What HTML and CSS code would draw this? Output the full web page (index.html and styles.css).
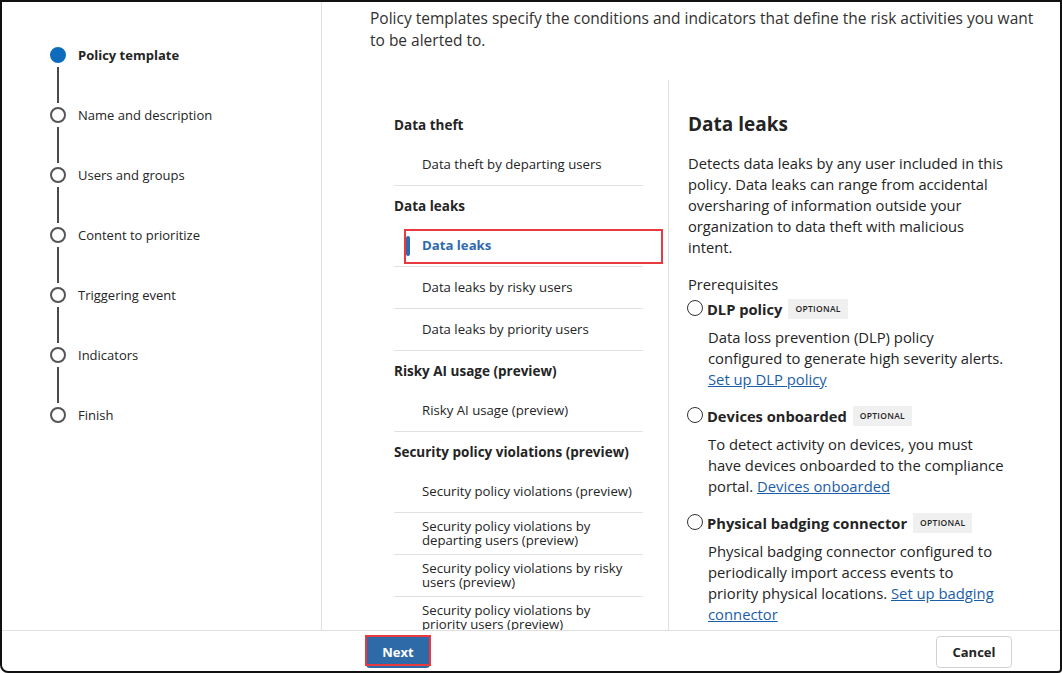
FILE: index.html
```html
<!DOCTYPE html>
<html lang="en">
<head>
<meta charset="utf-8">
<title>Policy template</title>
<link rel="stylesheet" href="styles.css">
</head>
<body>
<div class="frame">
  <div class="top">
    <nav class="steps">
      <div class="step active">
        <div class="rail"><span class="dot"></span><span class="line"></span></div>
        <span class="step-label">Policy template</span>
      </div>
      <div class="step">
        <div class="rail"><span class="dot"></span><span class="line"></span></div>
        <span class="step-label">Name and description</span>
      </div>
      <div class="step">
        <div class="rail"><span class="dot"></span><span class="line"></span></div>
        <span class="step-label">Users and groups</span>
      </div>
      <div class="step">
        <div class="rail"><span class="dot"></span><span class="line"></span></div>
        <span class="step-label">Content to prioritize</span>
      </div>
      <div class="step">
        <div class="rail"><span class="dot"></span><span class="line"></span></div>
        <span class="step-label">Triggering event</span>
      </div>
      <div class="step">
        <div class="rail"><span class="dot"></span><span class="line"></span></div>
        <span class="step-label">Indicators</span>
      </div>
      <div class="step last">
        <div class="rail"><span class="dot"></span></div>
        <span class="step-label">Finish</span>
      </div>
    </nav>
    <main class="main">
      <p class="intro">Policy templates specify the conditions and indicators that define the risk activities you want to be alerted to.</p>
      <div class="body">
        <div class="list">
          <div class="group-title">Data theft</div>
          <div class="item">Data theft by departing users</div>
          <div class="group-title">Data leaks</div>
          <div class="item selected">Data leaks</div>
          <div class="item">Data leaks by risky users</div>
          <div class="item">Data leaks by priority users</div>
          <div class="group-title">Risky AI usage (preview)</div>
          <div class="item">Risky AI usage (preview)</div>
          <div class="group-title">Security policy violations (preview)</div>
          <div class="item">Security policy violations (preview)</div>
          <div class="item">Security policy violations by departing users (preview)</div>
          <div class="item">Security policy violations by risky users (preview)</div>
          <div class="item">Security policy violations by priority users (preview)</div>
        </div>
        <section class="detail">
          <h2 class="detail-title">Data leaks</h2>
          <p class="detail-text">Detects data leaks by any user included in this<br>policy. Data leaks can range from accidental<br>oversharing of information outside your<br>organization to data theft with malicious<br>intent.</p>
          <div class="prereq-title">Prerequisites</div>
          <div class="prereq">
            <div class="prereq-head"><span class="radio"></span><span class="prereq-name">DLP policy</span><span class="badge">OPTIONAL</span></div>
            <p class="prereq-text">Data loss prevention (DLP) policy<br>configured to generate high severity alerts.<br><a href="#" class="link">Set up DLP policy</a></p>
          </div>
          <div class="prereq">
            <div class="prereq-head"><span class="radio"></span><span class="prereq-name">Devices onboarded</span><span class="badge">OPTIONAL</span></div>
            <p class="prereq-text">To detect activity on devices, you must<br>have devices onboarded to the compliance<br>portal. <a href="#" class="link">Devices onboarded</a></p>
          </div>
          <div class="prereq">
            <div class="prereq-head"><span class="radio"></span><span class="prereq-name">Physical badging connector</span><span class="badge">OPTIONAL</span></div>
            <p class="prereq-text">Physical badging connector configured to<br>periodically import access events to<br>priority physical locations. <a href="#" class="link">Set up badging<br>connector</a></p>
          </div>
        </section>
      </div>
    </main>
  </div>
  <footer class="footer">
    <button class="btn primary">Next</button>
    <button class="btn secondary">Cancel</button>
  </footer>
</div>
</body>
</html>
```
FILE: styles.css
```css
* { box-sizing: border-box; }
html, body { margin: 0; padding: 0; background: #ffffff; }
body {
  font-family: "Open Sans", "Noto Sans", sans-serif;
  color: #242424;
  width: 1062px;
  height: 673px;
  overflow: hidden;
}
.frame {
  width: 1062px;
  height: 673px;
  border: 2px solid #111;
  border-radius: 0 0 4px 8px;
  display: flex;
  flex-direction: column;
  overflow: hidden;
  background: #fff;
}
.top {
  flex: 1;
  display: flex;
  min-height: 0;
}
/* stepper */
.steps {
  width: 320px;
  flex: none;
  border-right: 1px solid #e0e0e0;
  padding: 45px 0 0 48px;
}
.step {
  display: flex;
  align-items: flex-start;
  gap: 12px;
  height: 60px;
}
.rail {
  width: 16px;
  display: flex;
  flex-direction: column;
  align-items: center;
}
.dot {
  width: 16px;
  height: 16px;
  border-radius: 50%;
  border: 2px solid #555;
  background: #fff;
}
.step.active .dot {
  background: #0f6cbd;
  border-color: #0f6cbd;
}
.line {
  width: 2px;
  height: 36px;
  margin-top: 4px;
  background: #4a4a4a;
}
.step-label {
  font-size: 13px;
  line-height: 16px;
  color: #242424;
}
.step.active .step-label { font-weight: 700; }

/* main */
.main {
  flex: 1;
  display: flex;
  flex-direction: column;
  min-width: 0;
  padding-left: 48px;
}
.intro {
  margin: 6px 0 0;
  font-size: 15.5px;
  line-height: 21.5px;
  color: #323130;
  padding-right: 20px;
}
.body {
  flex: 1;
  display: flex;
  margin-top: 29px;
  min-height: 0;
}
.list {
  width: 298px;
  flex: none;
  padding: 25px 25px 0 24px;
  overflow: hidden;
}
.group-title {
  font-size: 13.5px;
  font-weight: 700;
  height: 39px;
  line-height: 40px;
  color: #242424;
}
.item {
  position: relative;
  height: 42px;
  display: flex;
  align-items: center;
  padding: 0 8px 2px 28px;
  font-size: 13.2px;
  line-height: 14px;
  color: #242424;
  border-bottom: 1px solid #e1e1e1;
}
.item.selected {
  color: #2f6aac;
  font-weight: 700;
}
.item.selected::before {
  content: "";
  position: absolute;
  left: 12px;
  top: 11px;
  width: 4px;
  height: 20px;
  border-radius: 2px;
  background: #2f6aac;
}
.item.selected::after {
  content: "";
  position: absolute;
  left: 10px;
  right: -20px;
  top: 4px;
  bottom: 2px;
  border: 2px solid #e8393f;
}

.detail {
  flex: 1;
  border-left: 1px solid #e0e0e0;
  padding: 30px 20px 0 19px;
  overflow: hidden;
}
.detail-title {
  margin: 0;
  font-size: 19px;
  line-height: 28px;
  font-weight: 700;
  color: #242424;
}
.detail-text {
  margin: 15px 0 0;
  font-size: 14.7px;
  line-height: 21px;
  color: #242424;
}
.prereq-title {
  margin: 16px 0 1px;
  font-size: 14.7px;
  line-height: 21px;
}
.prereq { margin-bottom: 13px; }
.prereq-head {
  display: flex;
  align-items: center;
  height: 26px;
}
.radio {
  width: 16px;
  height: 16px;
  border-radius: 50%;
  border: 1px solid #333;
  margin-right: 4px;
  margin-left: -1px;
  margin-top: -2px;
  flex: none;
}
.prereq-name {
  font-size: 14.7px;
  font-weight: 700;
  color: #242424;
}
.badge {
  margin-left: 6px;
  background: #f0f0f0;
  font-size: 8.5px;
  letter-spacing: 0.3px;
  padding: 0 7px;
  height: 20px;
  line-height: 20px;
  color: #242424;
  font-weight: 600;
}
.prereq-text {
  margin: 5px 0 0 20px;
  font-size: 14.8px;
  line-height: 21px;
  color: #242424;
}
.link {
  color: #1a5ea8;
  text-decoration: underline;
}

/* footer */
.footer {
  flex: none;
  height: 41px;
  border-top: 1px solid #e0e0e0;
  display: flex;
  align-items: flex-start;
  justify-content: space-between;
  padding: 5px 48px 0 364px;
}
.btn {
  font-family: inherit;
  font-size: 13px;
  font-weight: 700;
  height: 32px;
  border-radius: 4px;
  cursor: pointer;
}
.btn.primary {
  position: relative;
  width: 64px;
  background: #2f6aa8;
  color: #fff;
  border: none;
}
.btn.primary::after {
  content: "";
  position: absolute;
  left: -1px;
  right: -1px;
  top: -1px;
  bottom: 2px;
  border: 2px solid #e8393f;
}
.btn.secondary {
  width: 76px;
  background: #fff;
  color: #242424;
  border: 1px solid #d1d1d1;
}
```
